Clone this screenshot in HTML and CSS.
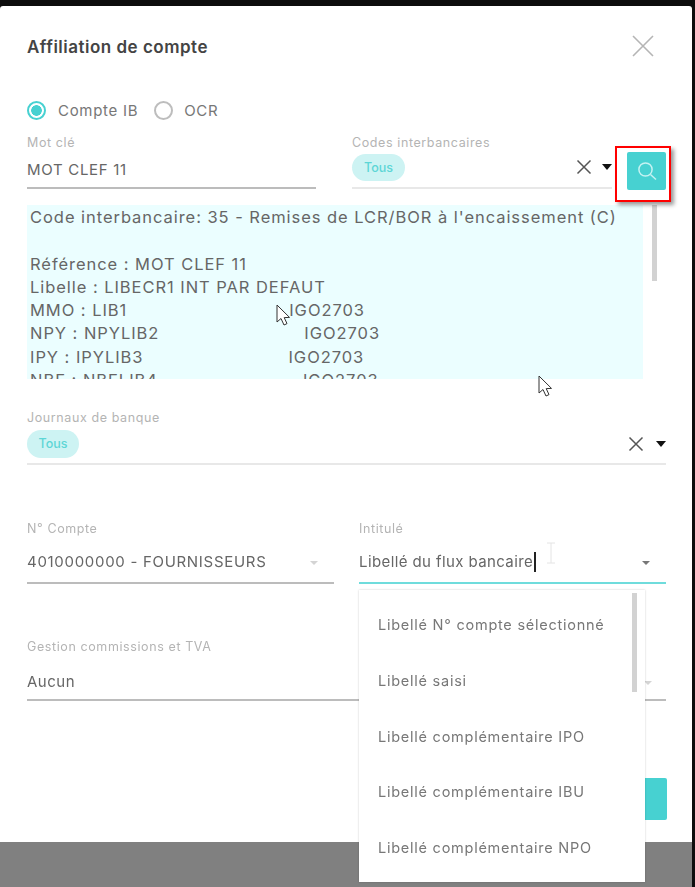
FILE: index.html
```html
<!DOCTYPE html>
<html lang="fr">
<head>
<meta charset="utf-8">
<title>Affiliation de compte</title>
<link rel="stylesheet" href="styles.css">
</head>
<body>
<div class="screen">
  <div class="modal">
    <header class="head">
      <h1 class="title">Affiliation de compte</h1>
      <svg class="close" width="24" height="24" viewBox="0 0 24 24"><path d="M2 2L22 22M22 2L2 22" stroke="#b5b5b5" stroke-width="1.6" fill="none"/></svg>
    </header>
    <div class="radios">
      <span class="radio on"></span><span class="radio-label">Compte IB</span>
      <span class="radio"></span><span class="radio-label">OCR</span>
    </div>
    <div class="search-row">
      <div class="field">
        <div class="label">Mot clé</div>
        <div class="value line-strong">MOT CLEF 11</div>
      </div>
      <div class="field">
        <div class="label">Codes interbancaires</div>
        <div class="chips line-light">
          <span class="chip">Tous</span>
          <span class="tools">
            <svg width="16" height="16" viewBox="0 0 16 16"><path d="M1.5 1.5L14.5 14.5M14.5 1.5L1.5 14.5" stroke="#555" stroke-width="1.5" fill="none"/></svg>
            <span class="caret dark"></span>
          </span>
        </div>
      </div>
      <button class="search-btn" aria-label="Rechercher">
        <svg width="22" height="22" viewBox="0 0 22 22"><circle cx="9.5" cy="9.5" r="6.6" stroke="#c5f2f2" stroke-width="1.5" fill="none"/><path d="M14.5 14.5L20 19.5" stroke="#c5f2f2" stroke-width="1.5"/></svg>
      </button>
    </div>
    <div class="result-row">
      <pre class="result">Code interbancaire: 35 - Remises de LCR/BOR à l'encaissement (C)

Référence : MOT CLEF 11
Libelle : LIBECR1 INT PAR DEFAUT
MMO : LIB1<span class="col c1">IGO2703</span>
NPY : NPYLIB2<span class="col c2">IGO2703</span>
IPY : IPYLIB3<span class="col c3">IGO2703</span>
NBE : NBELIB4<span class="col c2">IGO2703</span></pre>
      <div class="scroll-track"><div class="scroll-thumb"></div></div>
    </div>
    <div class="field journal">
      <div class="label">Journaux de banque</div>
      <div class="chips line-light journal-chips">
        <span class="chip chip-j">Tous</span>
        <span class="tools">
          <svg width="16" height="16" viewBox="0 0 16 16"><path d="M1.5 1.5L14.5 14.5M14.5 1.5L1.5 14.5" stroke="#555" stroke-width="1.5" fill="none"/></svg>
          <span class="caret dark"></span>
        </span>
      </div>
    </div>
    <div class="two-col">
      <div class="field">
        <div class="label">N° Compte</div>
        <div class="value select line-strong">4010000000 - FOURNISSEURS<span class="caret pale"></span></div>
      </div>
      <div class="field">
        <div class="label">Intitulé</div>
        <div class="value select line-teal"><span class="typed">Libellé du flux bancaire</span><span class="caret mid"></span></div>
      </div>
    </div>
    <div class="field gestion">
      <div class="label">Gestion commissions et TVA</div>
      <div class="value select line-strong"><span class="aucun">Aucun</span><span class="caret pale"></span></div>
    </div>
    <div class="foot"><button class="validate" aria-label="Valider"></button></div>
  </div>
  <div class="backdrop"></div>

  <div class="highlight"></div>

  <ul class="menu">
    <li>Libellé N° compte sélectionné</li>
    <li>Libellé saisi</li>
    <li>Libellé complémentaire IPO</li>
    <li>Libellé complémentaire IBU</li>
    <li>Libellé complémentaire NPO</li>
    <li class="menu-thumb"></li>
  </ul>

  <svg class="cursor cursor-a" width="16" height="24" viewBox="0 0 16 24"><path d="M1 1L1 18L5 14.5L8 21L11 19.6L8.2 13.6L13.5 13.4Z" fill="#fff" stroke="#333" stroke-width="1"/></svg>
  <svg class="cursor cursor-b" width="16" height="24" viewBox="0 0 16 24"><path d="M1 1L1 18L5 14.5L8 21L11 19.6L8.2 13.6L13.5 13.4Z" fill="#fff" stroke="#333" stroke-width="1"/></svg>
  <svg class="cursor cursor-i" width="10" height="22" viewBox="0 0 10 22"><path d="M1 1H9M5 1V21M1 21H9" stroke="#e4e4e4" stroke-width="1" fill="none"/></svg>
</div>
</body>
</html>
```

FILE: styles.css
```css
* { box-sizing: border-box; }
html, body { margin: 0; padding: 0; }
body {
  width: 695px;
  height: 887px;
  overflow: hidden;
  background: #0d0d0d;
  font-family: "Inter", "Liberation Sans", sans-serif;
}
.screen {
  position: relative;
  width: 695px;
  height: 887px;
  padding: 6px 3px 0 0;
  display: flex;
  flex-direction: column;
  overflow: hidden;
  filter: blur(0.45px);
}
.modal {
  height: 836px;
  flex: none;
  background: #fff;
  padding: 0 26px 0 27px;
  display: flex;
  flex-direction: column;
  border-radius: 3px 3px 0 0;
}
.backdrop { flex: 1; background: #808080; }

.head {
  height: 66px;
  display: flex;
  align-items: center;
  justify-content: space-between;
  padding: 16px 11px 0 0;
}
.title { margin: 0; font-size: 17px; font-weight: 600; color: #444; letter-spacing: .5px; }
.close { margin-top: -2px; }

.radios { height: 20px; margin-top: 28px; display: flex; align-items: center; font-size: 15px; letter-spacing: .7px; color: #777; }
.radio {
  width: 19px; height: 19px; border-radius: 50%;
  border: 2px solid #bdbdbd; background: #fff; flex: none;
}
.radio.on { border-color: #47d1d1; background: radial-gradient(circle, #47d1d1 0 5px, #fff 5.6px); }
.radio-label { margin: 0 16px 0 12px; }
.radio-label:last-child { margin-left: 11px; }

.label { font-size: 12.5px; letter-spacing: .6px; line-height: 15px; color: #b4b4b4; white-space: nowrap; }
.value {
  font-size: 15px; letter-spacing: .7px; line-height: 20px; color: #666;
  height: 41px;
  padding-top: 11px;
  white-space: nowrap;
}
.line-strong { border-bottom: 2px solid #bcbcbc; }
.line-light { border-bottom: 2px solid #e8e8e8; }
.line-teal { border-bottom: 2px solid #6fdcdc; }

.search-row {
  margin-top: 5px;
  padding-top: 9px;
  display: grid;
  grid-template-columns: 289px 260px 39px;
  column-gap: 36px;
  align-items: start;
}
.search-row .field:first-child .value { height: 36px; padding-top: 7px; margin-top: 3px; }
.search-row .field .label { padding-top: 1px; }
.chips { display: flex; align-items: center; justify-content: space-between; }
.search-row .chips { height: 38px; margin-top: 1px; padding-bottom: 4px; }
.chip {
  width: 53px; height: 27px; border-radius: 14px;
  background: #cdf3f3; color: #5dd6d6;
  font-size: 12.5px; font-weight: 500;
  display: flex; align-items: center; justify-content: center;
}
.tools { display: flex; align-items: center; gap: 10px; }
.caret {
  width: 0; height: 0; flex: none;
  border-left: 6px solid transparent;
  border-right: 6px solid transparent;
  border-top: 6px solid #111;
}
.caret.dark { border-left-width: 5.5px; border-right-width: 5.5px; }
.caret.pale { border-left-width: 4px; border-right-width: 4px; border-top: 4px solid #d4d4d4; }
.caret.mid { border-left-width: 4.5px; border-right-width: 4.5px; border-top: 4.5px solid #777; }
.search-btn {
  margin-top: 18px; margin-left: -21px;
  width: 39px; height: 38px;
  border: 0; padding: 0;
  background: #47d1d1;
  border-radius: 2px;
  display: flex; align-items: center; justify-content: center;
}

.result-row { margin-top: 15px; height: 174px; display: flex; gap: 9px; }
.result {
  margin: 0; width: 616px; height: 174px; overflow: hidden;
  background: #ebfeff;
  padding: 1px 0 0 3px;
  font-family: inherit;
  font-size: 16.5px; letter-spacing: .95px; line-height: 23.3px; color: #666;
}
.col { display: inline-block; }
.c1 { margin-left: 162px; }
.c2 { margin-left: 145px; }
.c3 { margin-left: 145px; }
.scroll-track { width: 5px; }
.scroll-thumb { width: 5px; height: 76px; background: #d2d2d2; }

.journal { margin-top: 31px; }
.journal-chips { height: 40px; padding-top: 5px; margin-top: 0; padding-bottom: 6px; }
.chip-j { width: 52px; height: 28px; }
.journal .tools { gap: 12px; }

.two-col {
  margin-top: 56px;
  display: grid;
  grid-template-columns: 307px 307px;
  column-gap: 25px;
}
.select { display: flex; align-items: center; justify-content: space-between; padding: 10px 16px 0 0; }
.two-col .value { height: 48px; padding-top: 7px; padding-bottom: 1px; }
.select .caret { margin-top: 2px; }
.typed { border-right: 2px solid #222; padding-right: 1px; color: #666; line-height: 20px; letter-spacing: .4px; }

.gestion { margin-top: 55px; }
.gestion .value { height: 47px; padding: 10px 14px 0 0; }
.aucun { letter-spacing: .5px; }

.foot { display: flex; justify-content: flex-end; margin-top: 77px; }
.validate { width: 120px; height: 42px; margin-right: -1px; border: 0; padding: 0; background: #47d1d1; border-radius: 2px; }

.highlight {
  position: absolute; left: 615px; top: 146px; width: 56px; height: 56px;
  border: 2px solid #f00;
  box-shadow: 3px 3px 4px rgba(0,0,0,.4);
}
.menu {
  position: absolute; left: 359px; top: 590px; width: 286px; height: 292px;
  margin: 0; padding: 7px 0 0 19px; list-style: none;
  background: #fff;
  box-shadow: 0 0 2px rgba(0,0,0,.2);
  font-size: 14.5px; letter-spacing: .75px; color: #777;
}
.menu li { height: 55.8px; line-height: 56px; white-space: nowrap; }
.menu .menu-thumb {
  position: absolute; left: 273px; top: 3px; width: 5px; height: 99px; background: #d2d2d2;
}
.cursor { position: absolute; }
.cursor-a { left: 276px; top: 304px; }
.cursor-b { left: 538px; top: 375px; }
.cursor-i { left: 546px; top: 542px; }
```
